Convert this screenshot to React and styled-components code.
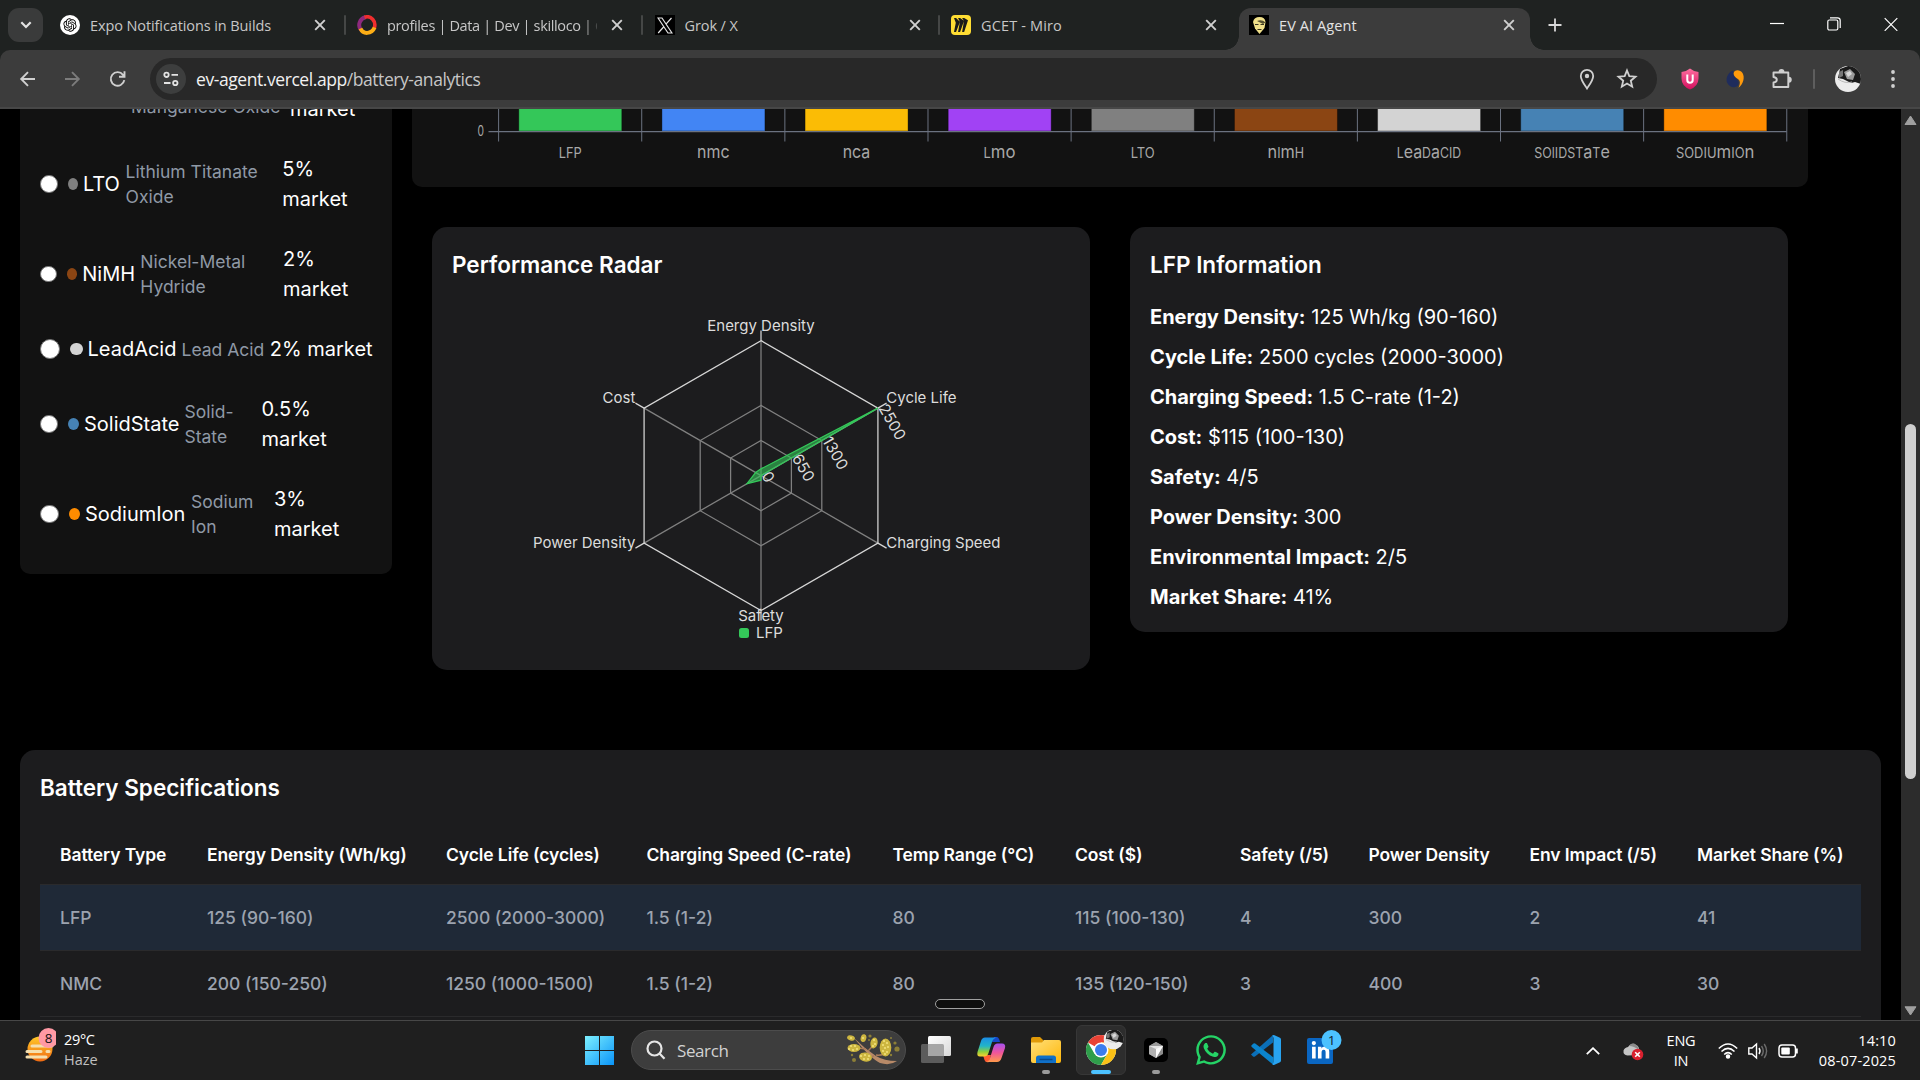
import React from "react";
import styled, { createGlobalStyle } from "styled-components";
import { RiOpenaiFill } from "react-icons/ri";
import { FaLinkedinIn, FaWhatsapp } from "react-icons/fa6";
import { SiMiro } from "react-icons/si";

const UI = `"Open Sans", "Noto Sans", sans-serif`;
const INTER = `Inter, "Liberation Sans", sans-serif`;

const Global = createGlobalStyle`
  * { box-sizing: border-box; }
  html, body { margin: 0; background: #000; overflow: hidden; }
  svg { display: block; flex: none; }
`;

const Screen = styled.div`
  width: 1920px;
  height: 1080px;
  display: flex;
  flex-direction: column;
  overflow: hidden;
  background: #000;
  color: #fff;
  font-family: ${INTER};
`;

/* ---------- browser chrome ---------- */
const TabStrip = styled.div`
  height: 50px;
  flex: none;
  display: flex;
  background: #1f2221;
  font-family: ${UI};
`;
const TabSearch = styled.div`
  width: 35px;
  height: 34px;
  margin: 8px 7px 0 8px;
  border-radius: 11px;
  background: #3a3b3b;
  display: grid;
  place-items: center;
  flex: none;
`;
const Tab = styled.div`
  width: ${(p) => p.$w}px;
  height: 50px;
  padding: 0 0 0 10px;
  display: flex;
  align-items: center;
  flex: none;
`;
const ActiveTab = styled(Tab)`
  position: relative;
  height: 42px;
  margin-top: 8px;
  padding-bottom: 8px;
  background: #3c3c3c;
  border-radius: 12px 12px 0 0;
  &::before, &::after {
    content: "";
    position: absolute;
    bottom: 0;
    width: 14px;
    height: 14px;
  }
  &::before { left: -14px; background: radial-gradient(circle at 0 0, #1f2221 13.5px, #3c3c3c 14px); }
  &::after { right: -14px; background: radial-gradient(circle at 100% 0, #1f2221 13.5px, #3c3c3c 14px); }
`;
const Favicon = styled.div`
  width: 20px;
  height: 20px;
  flex: none;
  border-radius: ${(p) => p.$r || 0}px;
  background: ${(p) => p.$bg || "transparent"};
  display: grid;
  place-items: center;
`;
const TabTitle = styled.div`
  width: 210px;
  margin: 1px 14px 0 10px;
  font-size: 14.5px;
  line-height: 20px;
  letter-spacing: ${(p) => p.$ls || "-0.1px"};
  color: ${(p) => (p.$on ? "#e3e3e3" : "#c7c7c7")};
  white-space: nowrap;
  overflow: hidden;
  flex: none;
  ${(p) => p.$fade && "mask-image: linear-gradient(90deg, #000 93%, transparent 102%);"}
`;
const Divider = styled.div`
  width: 2px;
  height: 20px;
  margin: ${(p) => p.$m || "15px 0 0"};
  background: ${(p) => p.$c || "#454746"};
  border-radius: 1px;
  flex: none;
`;
const WindowControls = styled.div`
  margin-left: auto;
  width: 171px;
  padding: 17px 22px 0 21px;
  display: flex;
  justify-content: space-between;
`;
const NewTab = styled.div`
  padding: 18px 0 0 18px;
`;
const ToolbarBack = styled.div`
  background: #1f2221;
  flex: none;
`;
const Toolbar = styled.div`
  height: 59px;
  display: flex;
  align-items: center;
  background: #3c3c3c;
  border-bottom: 2px solid #474747;
  border-radius: 10px 10px 0 0;
  font-family: ${UI};
`;
const NavGroup = styled.div`
  width: 150px;
  padding-left: 18px;
  display: flex;
  gap: 25px;
  flex: none;
`;
const AddressBar = styled.div`
  width: 1507px;
  height: 42px;
  padding: 0 19px 0 6px;
  border-radius: 21px;
  background: #282828;
  display: flex;
  align-items: center;
  flex: none;
`;
const SiteChip = styled.div`
  width: 30px;
  height: 30px;
  border-radius: 50%;
  background: #3d3e3e;
  display: grid;
  place-items: center;
`;
const Url = styled.div`
  margin: 1px auto 0 10px;
  font-size: 17.5px;
  letter-spacing: -0.43px;
  color: #c7c7c7;
  span { color: #f1f1f1; }
`;
const BarIcons = styled.div`
  display: flex;
  gap: 19px;
  align-items: center;
`;
const Extensions = styled.div`
  flex: 1;
  padding-left: 22px;
  display: flex;
  align-items: center;
`;
const Gap = styled.div`
  width: ${(p) => p.$w}px;
  flex: none;
`;

/* ---------- page ---------- */
const Viewport = styled.div`
  height: 911px;
  flex: none;
  display: flex;
  position: relative;
  overflow: hidden;
`;
const Page = styled.div`
  width: 1901px;
  height: 911px;
  overflow: hidden;
  padding: 0 20px;
  background: #000;
`;
const Upper = styled.div`
  display: flex;
  gap: 20px;
  height: 641px;
`;
const Sidebar = styled.div`
  width: 372px;
  height: 465px;
  padding: 0 20px 30px;
  background: #121212;
  border-radius: 0 0 10px 10px;
  display: flex;
  flex-direction: column;
  justify-content: flex-end;
  gap: 30px;
  overflow: hidden;
`;
const BatteryRow = styled.div`
  display: flex;
  align-items: center;
  flex: none;
`;
const ScrolledRow = styled.div`
  display: flex;
  align-items: flex-start;
  padding-left: 91px;
  flex: none;
`;
const Radio = styled.div`
  width: ${(p) => p.$s}px;
  height: ${(p) => p.$s}px;
  border-radius: 50%;
  background: #fff;
  border: 1px solid #767676;
  margin-right: 10px;
  flex: none;
`;
const Dot = styled.div`
  width: ${(p) => p.$w}px;
  height: 12.5px;
  border-radius: 50%;
  background: ${(p) => p.$c};
  flex: none;
`;
const BatteryName = styled.div`
  width: ${(p) => p.$w}px;
  padding-left: 5px;
  font-size: 20px;
  line-height: 30px;
  white-space: nowrap;
  flex: none;
`;
const BatteryDesc = styled.div`
  width: ${(p) => p.$w}px;
  font-size: 17.5px;
  line-height: 25px;
  color: #8f99a6;
  white-space: pre;
  flex: none;
`;
const BatteryShare = styled.div`
  font-size: 20px;
  line-height: 30px;
  white-space: pre;
`;
const Charts = styled.div`
  width: 1396px;
`;
const BarCard = styled.div`
  height: 78px;
  background: #121212;
  border-radius: 0 0 10px 10px;
`;
const Panels = styled.div`
  display: flex;
  align-items: flex-start;
  gap: 40px;
  padding: 40px 20px 0;
`;
const Card = styled.div`
  width: 658px;
  height: ${(p) => p.$h}px;
  padding: 20px;
  border-radius: 15px;
  background: #1c1c1e;
`;
const CardTitle = styled.div`
  font-size: 22.5px;
  line-height: 35px;
  font-weight: 600;
`;
const InfoList = styled.div`
  margin-top: 20px;
  display: flex;
  flex-direction: column;
  gap: 10px;
  font-size: 20px;
  line-height: 30px;
  b { font-weight: 700; }
`;
const TableCard = styled.div`
  width: 1861px;
  height: 300px;
  padding: 20px;
  border-radius: 15px 15px 0 0;
  background: #1c1c1e;
`;
const TableTitle = styled(CardTitle)`
  margin-bottom: 20px;
`;
const TableRow = styled.div`
  display: grid;
  grid-template-columns: 147px 239px 200.5px 246px 182.5px 165px 128.5px 161px 167.5px 184px;
  height: ${(p) => (p.$head ? 60 : 66)}px;
  align-items: center;
  font-size: 17.5px;
  font-weight: ${(p) => (p.$head ? 600 : 500)};
  letter-spacing: ${(p) => (p.$head ? "-0.1px" : "0")};
  color: ${(p) => (p.$head ? "#fff" : "#9ca3af")};
  background: ${(p) => (p.$sel ? "#1f2937" : "transparent")};
  border-bottom: 1px solid #2a2a2c;
`;
const Cell = styled.div`
  padding-left: 20px;
  white-space: nowrap;
`;
const ScrollTrack = styled.div`
  width: 19px;
  height: 911px;
  background: #2c2c2c;
  display: flex;
  flex-direction: column;
  align-items: center;
  padding: 6px 0 4px;
`;
const ScrollThumb = styled.div`
  width: 11px;
  height: 355px;
  margin: 299px 0 auto 0;
  border-radius: 6px;
  background: #cfcfcf;
`;
const Handle = styled.div`
  position: absolute;
  left: 935px;
  top: 890px;
  width: 50px;
  height: 10px;
  border: 1px solid #a0a0a0;
  border-radius: 5px;
  background: #0e0e0e;
`;

/* ---------- taskbar ---------- */
const Taskbar = styled.div`
  height: 60px;
  flex: none;
  display: flex;
  background: #1f1f1f;
  border-top: 1px solid #474747;
  font-family: ${UI};
  font-size: 14.5px;
  line-height: 20px;
`;
const Weather = styled.div`
  width: 585px;
  padding: 7px 0 0 24px;
  display: flex;
  flex: none;
`;
const WeatherText = styled.div`
  padding: 2px 0 0 8px;
  letter-spacing: -0.35px;
  span { color: #c0c0c0; letter-spacing: 0; }
`;
const WinLogo = styled.div`
  padding: 15px 17px 0 0;
`;
const SearchBox = styled.div`
  width: 275px;
  height: 40px;
  margin-top: 9px;
  padding: 0 5px 0 14px;
  border-radius: 20px;
  background: #3d3d3d;
  border: 1px solid #4c4c4c;
  display: flex;
  align-items: center;
  font-size: 17px;
  color: #d2d2d2;
  flex: none;
`;
const SearchLabel = styled.span`
  margin: 1px auto 0 11px;
  letter-spacing: -0.4px;
`;
const AppSlot = styled.div`
  width: 50px;
  height: 50px;
  margin: 4px 5px 0 0;
  padding-top: 9px;
  border-radius: 6px;
  display: flex;
  flex-direction: column;
  align-items: center;
  border: 1px solid ${(p) => (p.$on ? "#373737" : "transparent")};
  background: ${(p) => (p.$on ? "#2d2d2d" : "transparent")};
  flex: none;
`;
const TallArt = styled.div`
  margin-top: -5px;
  padding-left: ${(p) => p.$pl || 0}px;
`;
const Running = styled.div`
  width: ${(p) => (p.$on ? 20 : 8)}px;
  height: 4px;
  margin-top: 5px;
  border-radius: 2px;
  background: ${(p) => (p.$on ? "#4cc2ff" : "#9a9a9a")};
`;
const Tray = styled.div`
  margin-left: auto;
  padding-right: 24px;
  display: flex;
  align-items: center;
  height: 59px;
`;
const TrayText = styled.div`
  width: ${(p) => p.$w}px;
  padding-top: 1px;
  text-align: ${(p) => p.$a || "center"};
  letter-spacing: ${(p) => p.$ls || "-0.2px"};
`;

const CloseIcon = () => (
  <svg width="12" height="12" viewBox="0 0 12 12" stroke="#d0d0d0" strokeWidth="1.9">
    <path d="M1.2 1.2 10.8 10.8M10.8 1.2 1.2 10.8" />
  </svg>
);

const Avatar = ({ size }) => (
  <svg width={size} height={size} viewBox="0 0 26 26">
    <defs>
      <clipPath id={`face${size}`}><circle cx="13" cy="13" r="13" /></clipPath>
    </defs>
    <g clipPath={`url(#face${size})`}>
      <rect width="26" height="26" fill="#ececec" />
      <path d="M3 12 5 3 13 0 26 0V18L20 16 16 17 8 13Z" fill="#1b1b1b" />
      <path d="M9 6 15 3 20 8 18 14 12 13Z" fill="#9b9b9b" />
      <path d="M11 7 15 5 17 8 13 11Z" fill="#d8d8d8" />
      <path d="M4 6 8 4 8 10 4 12Z" fill="#777" />
      <path d="M3 13Q10 18 17 16" stroke="#bbb" fill="none" />
    </g>
  </svg>
);

const BATTERIES = [
  { n: "LTO", c: "#808080", r: 17.6, d: 10.3, nw: 47.7, desc: "Lithium Titanate\nOxide", dw: 156.7, s: "5%\nmarket" },
  { n: "NiMH", c: "#8b4513", r: 16.5, d: 10.8, nw: 63, desc: "Nickel-Metal\nHydride", dw: 142.7, s: "2%\nmarket" },
  { n: "LeadAcid", c: "#d3d3d3", r: 20, d: 12.5, nw: 99, desc: "Lead Acid", dw: 88.3, s: "2% market" },
  { n: "SolidState", c: "#4682b4", r: 17.6, d: 11.4, nw: 105.5, desc: "Solid-\nState", dw: 77, s: "0.5%\nmarket" },
  { n: "SodiumIon", c: "#ff8c00", r: 18.6, d: 11.4, nw: 111, desc: "Sodium\nIon", dw: 83, s: "3%\nmarket" },
];

/* Category labels in the unicase display face: [text, colour, width] */
const BARS = [
  ["LFP", "#34c759", 23],
  ["nmc", "#4285f4", 32.5],
  ["nca", "#fbbc05", 27.6],
  ["Lmo", "#a142f4", 32],
  ["LTO", "#808080", 24],
  ["nImH", "#8b4513", 36.5],
  ["LeaDaCID", "#d3d3d3", 64.5],
  ["SOlIDSTaTe", "#4682b4", 75.5],
  ["SODIUmIOn", "#ff8c00", 78.5],
];

const BarChart = () => {
  const x0 = 86.6;
  const step = 143.13;
  return (
    <svg width="1396" height="78" viewBox="0 0 1396 78" fontFamily={INTER}>
      {BARS.map(([label, color, w], i) => {
        const left = x0 + i * step;
        return (
          <g key={label}>
            <rect x={left + 20.2} y="-5" width="103" height="27" fill={color} stroke="#000" strokeOpacity=".35" strokeWidth="1" />
            <text x={left + step / 2 - w / 2} y="49.4" textLength={w} lengthAdjust="spacingAndGlyphs" fill="#a8a8a8" fontSize="14">
              {label.split("").map((ch, k) => (
                <tspan key={k} fontSize={/[a-km-z]/.test(ch) ? 18.2 : 14}>{ch}</tspan>
              ))}
            </text>
          </g>
        );
      })}
      <g stroke="#6b7280" strokeWidth="1">
        {Array.from({ length: 10 }, (_, i) => (
          <path key={i} d={`M${x0 + i * step} 0V32.5`} />
        ))}
        <path d={`M76.5 22.7H${x0 + 9 * step}`} strokeWidth="1.3" />
      </g>
      <text x="65.5" y="26.5" fontSize="14" fill="#a8a8a8" textLength="6.5" lengthAdjust="spacingAndGlyphs">0</text>
    </svg>
  );
};

const CX = 309;
const CY = 193.6;
const polar = (r, deg) => {
  const a = (deg * Math.PI) / 180;
  return [CX + r * Math.cos(a), CY - r * Math.sin(a)];
};
const ANGLES = [90, 30, -30, -90, -150, 150];
const hex = (r) => ANGLES.map((a) => polar(r, a).join(",")).join(" ");
const VALUES = [125, 2500, 1.5, 85, 300, 115];

const RadarChart = () => (
  <svg width="618" height="368" viewBox="0 0 618 368" fontFamily={INTER} fontSize="15" fill="#dcdcdc">
    <g fill="none" stroke="#808080" strokeWidth="1.25">
      <polygon points={hex(35.1)} />
      <polygon points={hex(70.2)} />
      {ANGLES.map((a) => {
        const [x, y] = polar(135, a);
        return <path key={a} d={`M${CX} ${CY}L${x} ${y}`} />;
      })}
    </g>
    <g fill="none" stroke="#d6d6d6" strokeWidth="1.25">
      <polygon points={hex(135)} />
      {ANGLES.map((a) => {
        const [x, y] = polar(135, a);
        const [u, v] = polar(145, a);
        return <path key={a} d={`M${x} ${y}L${u} ${v}`} />;
      })}
    </g>
    <polygon
      points={VALUES.map((v, i) => polar((v / 2500) * 135, ANGLES[i]).join(",")).join(" ")}
      fill="#34c759" fillOpacity=".6" stroke="#34c759" strokeWidth="1.25"
    />
    {[0, 650, 1300, 2500].map((v) => {
      const [x, y] = polar((v / 2500) * 135, 30);
      return <text key={v} x={x} y={y} fontSize="15.5" transform={`rotate(60 ${x} ${y})`}>{v}</text>;
    })}
    <text x={CX} y="49" textAnchor="middle">Energy Density</text>
    <text x="434.3" y="121.3">Cycle Life</text>
    <text x="434.3" y="266">Charging Speed</text>
    <text x={CX} y="339" textAnchor="middle">Safety</text>
    <text x="183.4" y="266" textAnchor="end">Power Density</text>
    <text x="183.4" y="121.3" textAnchor="end">Cost</text>
    <rect x="287" y="346" width="10" height="10" rx="2.5" fill="#34c759" />
    <text x="304" y="356">LFP</text>
  </svg>
);

const INFO = [
  ["Energy Density:", "125 Wh/kg (90-160)"],
  ["Cycle Life:", "2500 cycles (2000-3000)"],
  ["Charging Speed:", "1.5 C-rate (1-2)"],
  ["Cost:", "$115 (100-130)"],
  ["Safety:", "4/5"],
  ["Power Density:", "300"],
  ["Environmental Impact:", "2/5"],
  ["Market Share:", "41%"],
];
const HEAD = ["Battery Type", "Energy Density (Wh/kg)", "Cycle Life (cycles)", "Charging Speed (C-rate)", "Temp Range (°C)", "Cost ($)", "Safety (/5)", "Power Density", "Env Impact (/5)", "Market Share (%)"];
const ROWS = [
  ["LFP", "125 (90-160)", "2500 (2000-3000)", "1.5 (1-2)", "80", "115 (100-130)", "4", "300", "2", "41"],
  ["NMC", "200 (150-250)", "1250 (1000-1500)", "1.5 (1-2)", "80", "135 (120-150)", "3", "400", "3", "30"],
];

const Wattle = () => (
  <svg width="54" height="32" viewBox="0 0 54 32">
    <path d="M8 4Q18 14 30 22Q38 27 51 27Q44 32 34 29Q24 24 8 4Z" fill="#b88a68" />
    <path d="M22 17Q26 14 27 10M30 21Q38 22 41 17M20 15 12 14M28 22 20 24" stroke="#a87b5a" strokeWidth="1.5" fill="none" />
    <g fill="#cdb640">
      <ellipse cx="5" cy="4" rx="4" ry="2.5" transform="rotate(15 5 4)" />
      <ellipse cx="17.5" cy="4" rx="2.8" ry="4" transform="rotate(15 17 4)" />
      <ellipse cx="8" cy="14" rx="6.5" ry="4" />
      <ellipse cx="28" cy="9" rx="3.6" ry="5.5" transform="rotate(12 28 9)" />
      <ellipse cx="39.5" cy="13.5" rx="5.8" ry="9" />
      <ellipse cx="19.5" cy="23" rx="6.5" ry="4.6" transform="rotate(10 19 23)" />
    </g>
    <g fill="#f0e07a">
      {[[5, 12], [9, 12], [7, 16], [11, 15], [3, 15], [38, 7], [41, 9], [37, 11], [42, 13], [39, 14], [37, 17], [41, 18], [39, 20], [28, 6], [29, 10], [27, 12], [15, 22], [18, 25], [22, 25], [19, 21], [23, 22], [17, 4], [5, 4]].map(([x, y]) => (
        <circle key={`${x}-${y}`} cx={x} cy={y} r="1.1" />
      ))}
    </g>
    <g fill="#8d7f37">
      <circle cx="51" cy="15" r="2.6" /><circle cx="49" cy="9" r="1.6" /><circle cx="8" cy="26" r="2" />
      <circle cx="24" cy="2" r="1.6" /><circle cx="45" cy="4" r="1" /><circle cx="6" cy="21" r="1.2" /><circle cx="23" cy="6" r="1" /><circle cx="45" cy="21" r="1.2" />
    </g>
  </svg>
);

export default function App() {
  return (
    <Screen>
      <Global />
      <TabStrip>
        <TabSearch>
          <svg width="12" height="8" viewBox="0 0 12 8" fill="none" stroke="#e3e3e3" strokeWidth="2.2"><path d="M1.3 1.3 6 6l4.7-4.7" /></svg>
        </TabSearch>
        <Tab $w={293.5}>
          <Favicon $bg="#fff" $r={10}><RiOpenaiFill size={16} color="#000" /></Favicon>
          <TabTitle>Expo Notifications in Builds</TabTitle>
          <CloseIcon />
        </Tab>
        <Divider $m="15px 1.5px 0 0" />
        <Tab $w={294}>
          <Favicon>
            <svg width="20" height="20" viewBox="0 0 20 20" fill="none" strokeWidth="4">
              <path d="M8.5 2.2A8 8 0 0 0 4 15" stroke="#8e2a7e" />
              <path d="M7.5 2.3C14 0 19.500 6 17.300 13" stroke="#f02e2e" strokeWidth="3.6" />
              <path d="M3.500 13.500C6 19.500 14.500 19.500 17.600 12.500" stroke="#fcae16" />
            </svg>
          </Favicon>
          <TabTitle $fade $ls="-0.35px">profiles | Data | Dev | skilloco | C</TabTitle>
          <CloseIcon />
        </Tab>
        <Divider $m="15px 1.5px 0 0" />
        <Tab $w={293.5}>
          <Favicon $bg="#000">
            <svg width="16" height="17" viewBox="0 0 16 17" fill="none" stroke="#e6e6e6" strokeWidth="1.2">
              <path d="M1 1H5L15 16H11ZM14.500 1 9 7.200M7 9.500 1.200 16" />
            </svg>
          </Favicon>
          <TabTitle>Grok / X</TabTitle>
          <CloseIcon />
        </Tab>
        <Divider $m="15px 1px 0 0" />
        <Tab $w={298}>
          <Favicon $bg="#ffdd33" $r={4}><SiMiro size={14} color="#1a1a1a" /></Favicon>
          <TabTitle $ls="0.15px">GCET - Miro</TabTitle>
          <CloseIcon />
        </Tab>
        <ActiveTab $w={290.5}>
          <Favicon $bg="#000">
            <svg width="20" height="20" viewBox="0 0 20 20">
              <path d="M4 7Q5 2 10.500 2Q16 2 16.500 7L15.500 13 10.500 19 6 13.500Z" fill="#f0e08a" />
              <path d="M8 6Q13 4 16.500 7.500L14 9Z" fill="#55502f" />
              <path d="M6 9.500H9.500M11.500 9.500H15M8.500 14.500H12.500" stroke="#3a3620" strokeWidth="1.200" />
            </svg>
          </Favicon>
          <TabTitle $on $ls="0.1px">EV AI Agent</TabTitle>
          <CloseIcon />
        </ActiveTab>
        <NewTab>
          <svg width="14" height="14" viewBox="0 0 14 14" stroke="#d8d8d8" strokeWidth="1.800"><path d="M7 .5V13.500M.5 7H13.500" /></svg>
        </NewTab>
        <WindowControls>
          <svg width="14" height="14" viewBox="0 0 14 14" stroke="#fff"><path d="M0 6.500H14" strokeWidth="1.200" /></svg>
          <svg width="14" height="14" viewBox="0 0 14 14" fill="none" stroke="#fff" strokeWidth="1.200"><rect x=".8" y="3" width="10" height="10" rx="1.500" /><path d="M3 .8H10.500Q13.200.8 13.200 3.500V11" /></svg>
          <svg width="14" height="14" viewBox="0 0 14 14" stroke="#fff" strokeWidth="1.200"><path d="M.7 1.200 13.300 13.800M13.300 1.200.7 13.800" /></svg>
        </WindowControls>
      </TabStrip>
      <ToolbarBack>
        <Toolbar>
          <NavGroup>
            <svg width="20" height="20" viewBox="0 0 20 20" fill="none" stroke="#d0d0d0" strokeWidth="1.900"><path d="M17 10H3.500M10 3.200 3.200 10 10 16.800" /></svg>
            <svg width="20" height="20" viewBox="0 0 20 20" fill="none" stroke="#7c7c7c" strokeWidth="1.900"><path d="M2 10H15.500M9 3.200 15.800 10 9 16.800" /></svg>
            <svg width="20" height="20" viewBox="0 0 20 20" fill="none" stroke="#d0d0d0" strokeWidth="1.900"><path d="M16.300 11.200A6.800 6.800 0 1 1 15 5.800L16.500 7.500M16.500 2.300V7.700H11" /></svg>
          </NavGroup>
          <AddressBar>
            <SiteChip>
              <svg width="16" height="16" viewBox="0 0 16 16" fill="none" stroke="#e3e3e3" strokeWidth="1.800"><circle cx="3.500" cy="3.800" r="2.200" /><path d="M8.500 3.800H15M1 12H7.500" /><circle cx="12.300" cy="12" r="2.200" /></svg>
            </SiteChip>
            <Url><span>ev-agent.vercel.app</span>/battery-analytics</Url>
            <BarIcons>
              <svg width="20" height="22" viewBox="0 0 20 22" fill="none" stroke="#d0d0d0" strokeWidth="1.800"><path d="M10 20.500C7 16 3.800 12 3.800 8a6.200 6.200 0 0 1 12.400 0C16.200 12 13 16 10 20.500Z" /><circle cx="10" cy="8" r="2.200" fill="#d0d0d0" stroke="none" /></svg>
              <svg width="22" height="22" viewBox="0 0 22 22" fill="none" stroke="#d0d0d0" strokeWidth="1.800"><path d="M11 2.500 13.300 8.200 19.500 8.700 14.800 12.700 16.200 18.700 11 15.500 5.800 18.700 7.200 12.700 2.500 8.700 8.700 8.200Z" /></svg>
            </BarIcons>
          </AddressBar>
          <Extensions>
            <svg width="22" height="22" viewBox="0 0 22 22">
              <defs><linearGradient id="shield" x2="0" y2="1"><stop stopColor="#ff6fa0" /><stop offset="1" stopColor="#d30f5e" /></linearGradient></defs>
              <path d="M11 .5Q14.500 3.500 19.500 4V10.500Q19.500 18 11 21.500Q2.500 18 2.500 10.500V4Q7.500 3.500 11 .5Z" fill="url(#shield)" />
              <path d="M8.300 6.500V12Q8.300 14.800 11 14.800Q13.700 14.800 13.700 12V6.500" fill="none" stroke="#fff" strokeWidth="2" />
            </svg>
            <Gap $w={24} />
            <svg width="20" height="20" viewBox="0 0 20 20">
              <path d="M8 1.500C2 4 .3 10.500 2.600 14.500C5 19 11.500 19.500 13.500 15.500C15 11 8.500 9 8 1.500Z" fill="#1f2c5c" />
              <path d="M8.600 4.500C9 .5 15 .2 17.500 4C20 8 18.500 15 13.500 18.800C15.500 14 15.500 11.500 12.500 9.700C10.500 8.400 8.600 7 8.600 4.500Z" fill="#ff9a0c" />
            </svg>
            <Gap $w={26} />
            <svg width="22" height="22" viewBox="0 0 22 22" fill="none" stroke="#d0d0d0" strokeWidth="1.900" strokeLinejoin="round">
              <path d="M2.500 4.500H17.300V19H2.500V14.500Q5.800 14 5.800 11.700Q5.800 9.500 2.500 9Z" /><path d="M8.500 4a2 2 0 0 1 4 0M17.800 9.700a2 2 0 0 1 0 4" fill="#d0d0d0" />
            </svg>
            <Gap $w={20} />
            <Divider $m="0" $c="#5e5e5e" />
            <Gap $w={20} />
            <Avatar size={26} />
            <Gap $w={29} />
            <svg width="6" height="20" viewBox="0 0 6 20" fill="#d0d0d0"><circle cx="3" cy="3" r="1.900" /><circle cx="3" cy="10" r="1.900" /><circle cx="3" cy="17" r="1.900" /></svg>
          </Extensions>
        </Toolbar>
      </ToolbarBack>

      <Viewport>
        <Page>
          <Upper>
            <Sidebar>
              <ScrolledRow>
                <BatteryDesc $w={159}>Manganese Oxide</BatteryDesc>
                <BatteryShare>market</BatteryShare>
              </ScrolledRow>
              {BATTERIES.map((b) => (
                <BatteryRow key={b.n}>
                  <Radio $s={b.r} />
                  <Dot $w={b.d} $c={b.c} />
                  <BatteryName $w={b.nw}>{b.n}</BatteryName>
                  <BatteryDesc $w={b.dw}>{b.desc}</BatteryDesc>
                  <BatteryShare>{b.s}</BatteryShare>
                </BatteryRow>
              ))}
            </Sidebar>
            <Charts>
              <BarCard><BarChart /></BarCard>
              <Panels>
                <Card $h={443}>
                  <CardTitle>Performance Radar</CardTitle>
                  <RadarChart />
                </Card>
                <Card $h={405}>
                  <CardTitle>LFP Information</CardTitle>
                  <InfoList>
                    {INFO.map(([k, v]) => (
                      <div key={k}><b>{k}</b> {v}</div>
                    ))}
                  </InfoList>
                </Card>
              </Panels>
            </Charts>
          </Upper>
          <TableCard>
            <TableTitle>Battery Specifications</TableTitle>
            <TableRow $head>{HEAD.map((h) => <Cell key={h}>{h}</Cell>)}</TableRow>
            {ROWS.map((r, i) => (
              <TableRow key={r[0]} $sel={i === 0}>{r.map((c, k) => <Cell key={k}>{c}</Cell>)}</TableRow>
            ))}
          </TableCard>
        </Page>
        <ScrollTrack>
          <svg width="13" height="10" viewBox="0 0 13 10"><path d="M6.500 1 12 9.500H1Z" fill="#a0a0a0" stroke="#a0a0a0" strokeLinejoin="round" /></svg>
          <ScrollThumb />
          <svg width="13" height="10" viewBox="0 0 13 10"><path d="M6.500 9 12 .8H1Z" fill="#a0a0a0" stroke="#a0a0a0" strokeLinejoin="round" /></svg>
        </ScrollTrack>
        <Handle />
      </Viewport>

      <Taskbar>
        <Weather>
          <svg width="32" height="36" viewBox="0 0 32 36">
            <defs><linearGradient id="sun" x2="0" y2="1"><stop stopColor="#ffc928" /><stop offset="1" stopColor="#f06a12" /></linearGradient></defs>
            <circle cx="16" cy="21" r="12.500" fill="url(#sun)" />
            <g stroke="#f5dfae" strokeWidth="3" strokeLinecap="round"><path d="M8 18H28M3 23.500H17M23 23.500H25M3 29H22" /></g>
            <circle cx="24.500" cy="10" r="10" fill="#ff99a4" />
            <text x="24.500" y="15" textAnchor="middle" fontSize="13.500" fill="#111" fontFamily={UI}>8</text>
          </svg>
          <WeatherText>29°C<br /><span>Haze</span></WeatherText>
        </Weather>
        <WinLogo>
          <svg width="29" height="29" viewBox="0 0 29 29">
            <defs><linearGradient id="win" x2="1" y2="1"><stop stopColor="#7df0ff" /><stop offset="1" stopColor="#0a94f8" /></linearGradient></defs>
            <path d="M0 0H14V14H0ZM15 0H29V14H15ZM0 15H14V29H0ZM15 15H29V29H15Z" fill="url(#win)" />
          </svg>
        </WinLogo>
        <SearchBox>
          <svg width="20" height="20" viewBox="0 0 20 20" fill="none" stroke="#e6e6e6" strokeWidth="2.200"><circle cx="8.500" cy="8.500" r="7" /><path d="M13.500 13.500 18.500 18.800" /></svg>
          <SearchLabel>Search</SearchLabel>
          <Wattle />
        </SearchBox>
        <Gap $w={5} />
        <AppSlot>
          <svg width="30" height="30" viewBox="0 0 30 30">
            <defs><linearGradient id="tv" x2="1" y2="1"><stop stopColor="#fff" /><stop offset="1" stopColor="#d8d8d8" /></linearGradient></defs>
            <rect x="0" y="9" width="23" height="19" rx="1.500" fill="#5c5c5c" />
            <rect x="7" y="1" width="23" height="20" rx="1.500" fill="url(#tv)" />
            <path d="M7 9H21.500Q23 9 23 10.500V21H8.500Q7 21 7 19.500Z" fill="#a6a6a6" />
          </svg>
        </AppSlot>
        <AppSlot>
          <svg width="30" height="30" viewBox="0 0 30 30">
            <defs>
              <linearGradient id="cpA" x2="0" y2="1"><stop stopColor="#1b8de6" /><stop offset=".45" stopColor="#22b5c8" /><stop offset=".75" stopColor="#8fcf3c" /><stop offset="1" stopColor="#ffd02f" /></linearGradient>
              <linearGradient id="cpB" x2="0" y2="1"><stop stopColor="#a650f0" /><stop offset=".5" stopColor="#f0559a" /><stop offset="1" stopColor="#ff9a4a" /></linearGradient>
            </defs>
            <path d="M18 2H21Q23 2.500 24 7H16Z" fill="#1648c8" />
            <path d="M7 20H15L13 27Q9.500 28 8.500 25Z" fill="#ff5a32" />
            <path d="M9 2.500H20Q17 3.500 16 7L12.500 18Q11.500 21.500 8 21.500H4Q.5 21.500 1.500 17L5 6Q6 2.500 9 2.500Z" fill="url(#cpA)" />
            <path d="M21.500 8.500H26Q30 8.500 29 13L25.500 23Q24.300 27 21 27H10Q13 26.500 14 23L17.500 12Q18.500 8.500 21.500 8.500Z" fill="url(#cpB)" />
          </svg>
        </AppSlot>
        <AppSlot>
          <svg width="30" height="30" viewBox="0 0 30 30">
            <defs><linearGradient id="fold" x2="1" y2="1"><stop stopColor="#ffe07a" /><stop offset="1" stopColor="#ffb70a" /></linearGradient></defs>
            <path d="M0 4Q0 2 2 2H9L13 6V10H0Z" fill="#e09a08" />
            <path d="M0 7.500H11L13 5H28Q30 5 30 7V26Q30 28 28 28H2Q0 28 0 26Z" fill="url(#fold)" />
            <path d="M5 28V23Q5 20.500 7.500 20.500H22.500Q25 20.500 25 23V28Z" fill="#1070c8" /><path d="M8.500 24.500H21.500" stroke="#0a4a8c" strokeWidth="1.500" />
          </svg>
          <Running />
        </AppSlot>
        <AppSlot $on>
          <TallArt $pl={2}>
            <svg width="46" height="35" viewBox="0 0 46 35">
              <circle cx="22" cy="20" r="15" fill="#fff" />
              <path d="M22 20 9 12.500A15 15 0 0 1 35 12.500H22Z" fill="#e94235" />
              <path d="M9 12.500A15 15 0 0 0 22 35L28.500 23.700 22 20 15.500 23.700Z" fill="#2f9e4b" />
              <path d="M35 12.500A15 15 0 0 1 22 35L28.500 23.700 28.500 16 22 12.500Z" fill="#fbc116" />
              <circle cx="22" cy="20" r="7.500" fill="#fff" /><circle cx="22" cy="20" r="6" fill="#3b7ded" />
              <g transform="translate(24.500 -.5)"><Avatar size={20} /></g>
            </svg>
          </TallArt>
          <Running $on />
        </AppSlot>
        <AppSlot>
          <svg width="30" height="30" viewBox="0 0 30 30">
            <rect x="3" y="3" width="24" height="24" rx="5" fill="#000" />
            <path d="M15 7 22 11V19L15 23 8 19V11Z" fill="#8c8c8c" /><path d="M8 11 15 7 22 11 15 13.500Z" fill="#9a9a9a" /><path d="M8 11H22L15 23Z" fill="#e4e4e4" /><path d="M22 11 15 23V14Z" fill="#fafafa" /><path d="M8 11 15 14V23L8 19Z" fill="#b0b0b0" />
          </svg>
          <Running />
        </AppSlot>
        <AppSlot><FaWhatsapp size={34} color="#25d366" style={{ margin: -2 }} /></AppSlot>
        <AppSlot>
          <svg width="30" height="30" viewBox="0 0 30 30">
            <path d="M0 19.500 2 21.500Q2.800 22.200 4 21.500L22 7.500V0Z" fill="#0b6fb8" />
            <path d="M.3 10.500 2.500 8.500Q3.300 8 4.200 8.600L22.500 22.500V30L.5 11.800Z" fill="#0b84cc" />
            <path d="M21.500.2Q22.500-.2 23.500.2L29 2.800Q30 3.300 30 4.500V25.500Q30 26.700 29 27.200L23.500 29.800Q22.500 30.200 21.500 29.800L22.500 27V3Z" fill="#28a3f0" />
          </svg>
        </AppSlot>
        <AppSlot>
          <TallArt $pl={2}>
            <svg width="46" height="34" viewBox="0 0 46 34">
              <rect x="8" y="8" width="26" height="26" rx="2" fill="#0a66c2" />
              <g transform="translate(11.500 11)"><FaLinkedinIn size={20} color="#fff" /></g>
              <circle cx="32.500" cy="10" r="10" fill="#4cc2ff" />
              <text x="32.500" y="15" textAnchor="middle" fontSize="13.500" fill="#10222e" fontFamily={UI}>1</text>
            </svg>
          </TallArt>
        </AppSlot>
        <Tray>
          <svg width="14" height="8" viewBox="0 0 14 8" fill="none" stroke="#fff" strokeWidth="1.800"><path d="M.8 7.200 7 1.200l6.200 6" /></svg>
          <Gap $w={23} />
          <svg width="21" height="20" viewBox="0 0 21 20">
            <path d="M4.500 14.500Q0 14 .5 9.500Q1.500 6.500 5 6Q8 1.500 12 4Q15.500 4 16 8Q18 11 15 14Z" fill="#c4c4c4" /><path d="M6 5Q10-.5 14.500 5L16 9Q11 5 6 5Z" fill="#8a8a8a" />
            <circle cx="14.500" cy="13.500" r="5.800" fill="#d9202e" /><path d="M12.200 11.200 16.800 15.800M16.800 11.200 12.200 15.800" stroke="#fff" strokeWidth="1.600" />
          </svg>
          <Gap $w={17} />
          <TrayText $w={40}>ENG<br />IN</TrayText>
          <Gap $w={17} />
          <svg width="20" height="16" viewBox="0 0 20 16" fill="none" stroke="#fff" strokeWidth="1.500"><path d="M.8 5.500Q10-3.500 19.200 5.500M3.500 8.500Q10 2.200 16.500 8.500M6.200 11.500Q10 7.800 13.800 11.500" /><circle cx="10" cy="13.500" r="1.500" fill="#fff" /></svg>
          <Gap $w={10} />
          <svg width="21" height="18" viewBox="0 0 21 18" fill="none" stroke="#fff" strokeWidth="1.400"><path d="M.8 6V12H4L8.500 16V2L4 6ZM11 6Q13 9 11 12" /><path d="M13.500 4Q17 9 13.500 14M16.200 2Q21 9 16.200 16" stroke="#6c6c6c" /></svg>
          <Gap $w={9} />
          <svg width="21" height="14" viewBox="0 0 21 14" fill="none" stroke="#fff" strokeWidth="1.500"><rect x="1" y="1" width="16.500" height="12" rx="3" /><rect x="3.300" y="3.500" width="8.500" height="7" rx="1" fill="#fff" stroke="none" /><path d="M18.800 4.500V9.500" strokeWidth="2" /></svg>
          <TrayText $w={97} $a="right" $ls="0.15px">14:10<br />08-07-2025</TrayText>
        </Tray>
      </Taskbar>
    </Screen>
  );
}
